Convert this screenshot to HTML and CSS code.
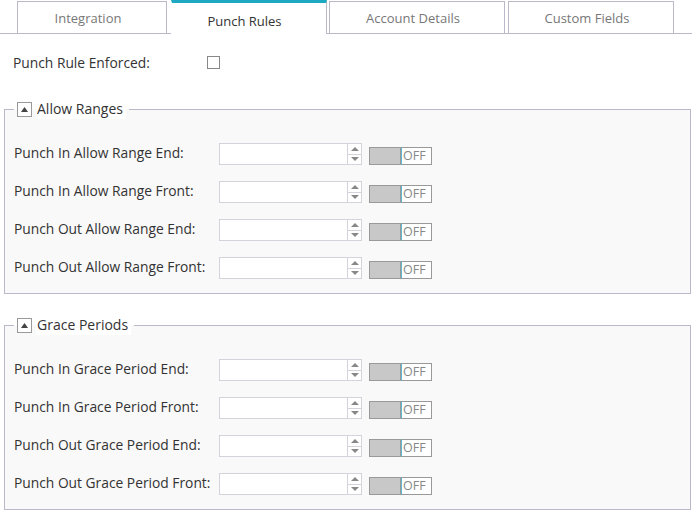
FILE: index.html
```html
<!DOCTYPE html>
<html lang="en">
<head>
    <meta charset="UTF-8">
    <title>Punch Rules</title>
    <link rel="stylesheet" href="styles.css">
</head>
<body>

    <div class="tabs">
        <div class="tab">Integration</div>
        <div class="tab active">Punch Rules</div>
        <div class="tab">Account Details</div>
        <div class="tab">Custom Fields</div>
    </div>

    <div class="enforced-row">
        <label>Punch Rule Enforced:</label>
        <span class="checkbox"></span>
    </div>

    <!-- Allow Ranges -->
    <fieldset class="group">
        <legend>
            <span class="collapse-btn"><svg width="7" height="5" viewBox="0 0 7 5"><path d="M0 5 L3.5 0 L7 5 Z" fill="#444"/></svg></span>
            <span class="legend-text">Allow Ranges</span>
        </legend>
        <div class="field-row">
            <label>Punch In Allow Range End:</label>
            <div class="spin-input"><input type="text"><span class="spin"><i class="up"></i><i class="down"></i></span></div>
            <div class="switch"><span class="knob"></span><span class="state">OFF</span></div>
        </div>
        <div class="field-row">
            <label>Punch In Allow Range Front:</label>
            <div class="spin-input"><input type="text"><span class="spin"><i class="up"></i><i class="down"></i></span></div>
            <div class="switch"><span class="knob"></span><span class="state">OFF</span></div>
        </div>
        <div class="field-row">
            <label>Punch Out Allow Range End:</label>
            <div class="spin-input"><input type="text"><span class="spin"><i class="up"></i><i class="down"></i></span></div>
            <div class="switch"><span class="knob"></span><span class="state">OFF</span></div>
        </div>
        <div class="field-row">
            <label>Punch Out Allow Range Front:</label>
            <div class="spin-input"><input type="text"><span class="spin"><i class="up"></i><i class="down"></i></span></div>
            <div class="switch"><span class="knob"></span><span class="state">OFF</span></div>
        </div>
    </fieldset>

    <!-- Grace Periods -->
    <fieldset class="group">
        <legend>
            <span class="collapse-btn"><svg width="7" height="5" viewBox="0 0 7 5"><path d="M0 5 L3.5 0 L7 5 Z" fill="#444"/></svg></span>
            <span class="legend-text">Grace Periods</span>
        </legend>
        <div class="field-row">
            <label>Punch In Grace Period End:</label>
            <div class="spin-input"><input type="text"><span class="spin"><i class="up"></i><i class="down"></i></span></div>
            <div class="switch"><span class="knob"></span><span class="state">OFF</span></div>
        </div>
        <div class="field-row">
            <label>Punch In Grace Period Front:</label>
            <div class="spin-input"><input type="text"><span class="spin"><i class="up"></i><i class="down"></i></span></div>
            <div class="switch"><span class="knob"></span><span class="state">OFF</span></div>
        </div>
        <div class="field-row">
            <label>Punch Out Grace Period End:</label>
            <div class="spin-input"><input type="text"><span class="spin"><i class="up"></i><i class="down"></i></span></div>
            <div class="switch"><span class="knob"></span><span class="state">OFF</span></div>
        </div>
        <div class="field-row">
            <label>Punch Out Grace Period Front:</label>
            <div class="spin-input"><input type="text"><span class="spin"><i class="up"></i><i class="down"></i></span></div>
            <div class="switch"><span class="knob"></span><span class="state">OFF</span></div>
        </div>
    </fieldset>

</body>
</html>
```

FILE: styles.css
```css
body {
    margin: 0;
    font-family: 'Open Sans', 'Noto Sans', sans-serif;
    font-size: 13.8px;
    color: #333;
    background: white;
}

/* Tabs */
.tabs {
    display: flex;
    align-items: flex-end;
    height: 33px;
    padding-left: 17px;
    border-bottom: 1px solid #b9b9c9;
}

.tab {
    height: 32px;
    line-height: 32px;
    box-sizing: border-box;
    border: 1px solid #b9b9c9;
    border-bottom: none;
    text-align: center;
    padding-right: 8px;
    color: #777;
    font-size: 13px;
    margin-right: 4px;
}

.tab:nth-child(1) { width: 150px; }
.tab:nth-child(2) { width: 156px; margin-right: 2px; }
.tab:nth-child(3) { width: 176px; margin-right: 3px; }
.tab:nth-child(4) { width: 166px; }

.tab.active {
    border-top: 3px solid #1ca9c1;
    border-left-color: white;
    height: 34px;
    margin-bottom: -1px;
    line-height: 37px;
    padding-right: 9px;
    color: #333;
    background: white;
}

.enforced-row {
    display: flex;
    align-items: center;
    height: 22px;
    margin-top: 17px;
    padding-left: 13px;
}

.enforced-row label {
    width: 194px;
}

.checkbox {
    width: 11px;
    height: 11px;
    border: 1px solid #888;
    background: white;
}

/* Field groups */
.group {
    margin: 26px 1px 0 4px;
    padding: 24px 0 14px 9px;
    border: 1px solid #b9b9c9;
    background: #f9f9f9;
}

.group + .group {
    margin-top: 21px;
}

.group legend {
    display: flex;
    align-items: center;
    margin-left: 0;
    padding: 0 3px;
    height: 20px;
}

.collapse-btn {
    display: flex;
    align-items: center;
    justify-content: center;
    width: 13px;
    height: 13px;
    border: 1px solid #999;
    background: white;
    margin-right: 4px;
}

.legend-text {
    font-size: 14px;
    color: #333;
    background: white;
    padding: 0 3px 0 1px;
    line-height: 20px;
}

.field-row {
    display: flex;
    align-items: center;
    height: 22px;
    margin-bottom: 16px;
}

.field-row:last-child {
    margin-bottom: 0;
}

.field-row label {
    width: 205px;
    margin-top: -4px;
}

.spin-input {
    display: flex;
    width: 141px;
    height: 20px;
    border: 1px solid #d3d3db;
    background: white;
}

.spin-input input {
    flex: 1;
    min-width: 0;
    border: none;
    border-right: 1px solid #d3d3db;
    padding: 0;
    margin: 0;
    outline: none;
    background: white;
}

.spin {
    display: flex;
    flex-direction: column;
    width: 13px;
}

.spin i {
    flex: 1;
    display: flex;
    align-items: center;
    justify-content: center;
}

.spin i.up {
    border-bottom: 1px solid #d3d3db;
}

.spin i.up::before {
    content: "";
    border-left: 4px solid transparent;
    border-right: 4px solid transparent;
    border-bottom: 4px solid #888;
}

.spin i.down::before {
    content: "";
    border-left: 4px solid transparent;
    border-right: 4px solid transparent;
    border-top: 4px solid #888;
}

.switch {
    display: flex;
    margin-left: 7px;
    height: 18px;
    margin-top: 3px;
}

.switch .knob {
    width: 32px;
    box-sizing: border-box;
    background: #c8c8c8;
    border: 1px solid #999;
}

.switch .state {
    width: 31px;
    box-sizing: border-box;
    border: 1px solid #999;
    border-left: 1px solid #5fb8d0;
    background: white;
    color: #888;
    font-size: 12.5px;
    line-height: 16px;
    padding-left: 1px;
}
```
